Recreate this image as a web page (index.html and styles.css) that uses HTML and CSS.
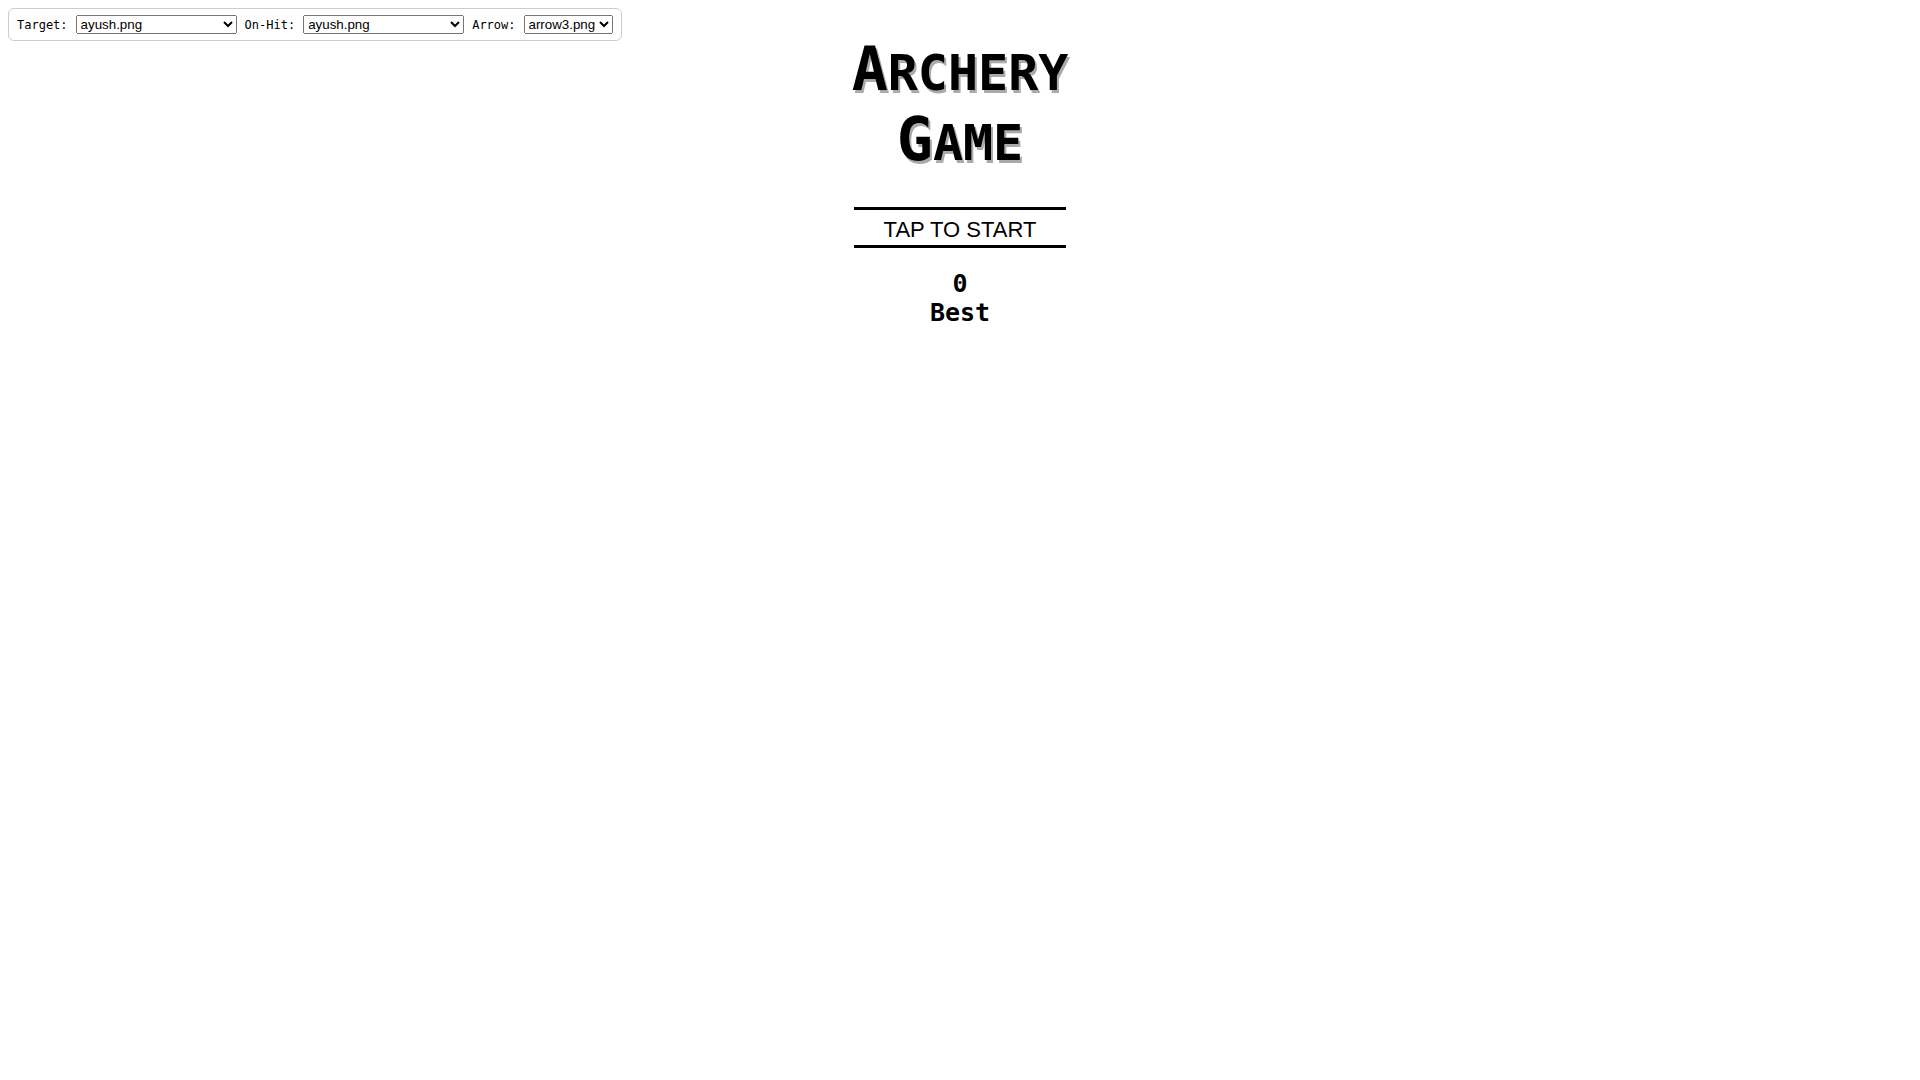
FILE: index.html
```html
<!DOCTYPE html>
<html lang="en">
<head>
    <meta charset="UTF-8">
    <meta name="viewport" content="width=device-width, initial-scale=1.0">
    <title>Archery Game</title>
    <link rel="stylesheet" href="styles.css">
</head>
<body>
    <!-- Image pickers -->
    <div class="settings">
        <label for="targetSelect">Target:</label>
        <select id="targetSelect" class="wide-select">
            <option>ayush.png</option>
        </select>
        <label for="hitSelect">On-Hit:</label>
        <select id="hitSelect" class="wide-select">
            <option>ayush.png</option>
        </select>
        <label for="arrowSelect">Arrow:</label>
        <select id="arrowSelect">
            <option>arrow3.png</option>
        </select>
    </div>

    <main class="game">
        <h1><span class="cap">A</span>RCHERY<br><span class="cap">G</span>AME</h1>
        <button id="startBtn" class="start-btn" type="button">TAP TO START</button>
        <div class="score">
            <div id="score">0</div>
            <div>Best</div>
        </div>
    </main>
</body>
</html>
```
FILE: styles.css
```css
body {
    font-family: "DejaVu Sans Mono", monospace;
    margin: 0;
    background-color: #fff;
    color: #000;
}

/* Settings bar */
.settings {
    position: fixed;
    top: 8px;
    left: 8px;
    display: flex;
    align-items: center;
    gap: 8px;
    padding: 6px 8px;
    border: 1px solid #ccc;
    border-radius: 6px;
    background-color: #fff;
    font-size: 12px;
}

.settings select {
    font-family: "Liberation Sans", Arial, sans-serif;
}

.wide-select {
    width: 161px;
}

/* Game menu */
.game {
    display: flex;
    flex-direction: column;
    align-items: center;
    padding-top: 34px;
    text-align: center;
}

h1 {
    margin: 0;
    font-size: 50px;
    text-shadow: 2px 3px #aaa;
}

.cap {
    font-size: 60px;
}

.start-btn {
    margin-top: 33px;
    padding: 7px 30px 3px;
    border: 0 solid #000;
    border-width: 3px 0;
    background: none;
    color: #000;
    font-family: "Liberation Sans", Arial, sans-serif;
    font-size: 22px;
    line-height: 25px;
    cursor: pointer;
}

.score {
    margin-top: 21px;
    font-size: 25px;
    font-weight: bold;
}
```
